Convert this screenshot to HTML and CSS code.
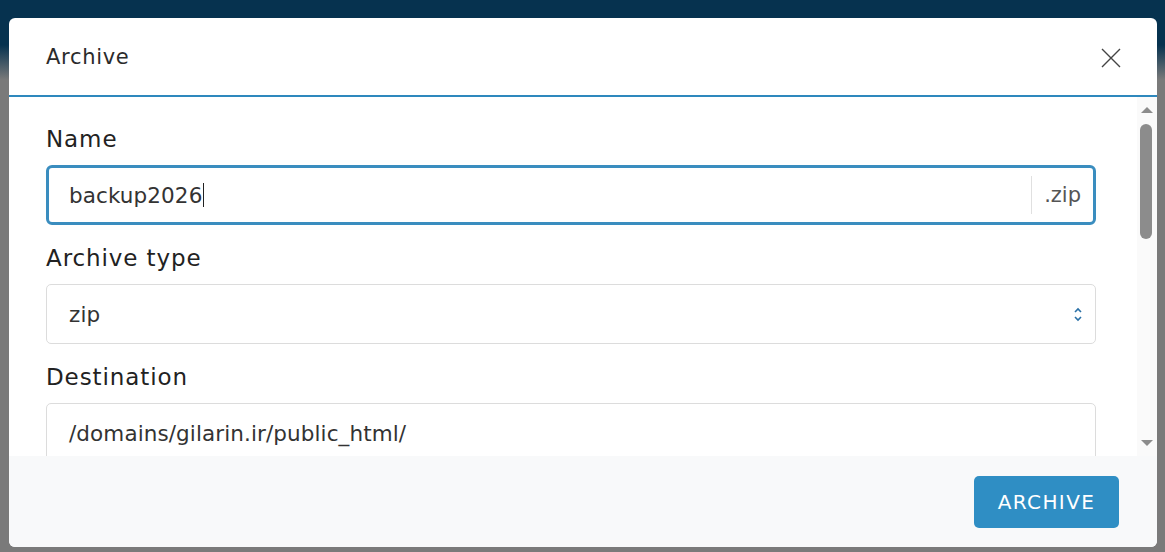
FILE: index.html
```html
<!DOCTYPE html>
<html lang="en">

<head>
    <meta charset="UTF-8">
    <meta name="viewport" content="width=device-width, initial-scale=1.0">
    <title>Archive</title>
    <link rel="stylesheet" href="styles.css">
</head>

<body>

    <div class="modal">
        <div class="modalHeader">
            <h2 class="modalTitle">Archive</h2>
            <button class="closeBtn" aria-label="Close">
                <svg width="20" height="20" viewBox="0 0 20 20">
                    <path d="M1 1L19 19M19 1L1 19" stroke="#444" stroke-width="1.4" fill="none" />
                </svg>
            </button>
        </div>

        <div class="modalBody">
            <div class="bodyContent">
                <label class="fieldLabel">Name</label>
                <div class="inputBox focused">
                    <span class="inputText">backup2026<span class="caret"></span></span>
                    <span class="suffix">.zip</span>
                </div>

                <label class="fieldLabel">Archive type</label>
                <div class="inputBox">
                    <span class="inputText">zip</span>
                    <svg class="chevrons" width="10" height="15" viewBox="0 0 10 15">
                        <path d="M2 5L5 2L8 5M2 10L5 13L8 10" stroke="#2a70a6" stroke-width="1.6" fill="none" />
                    </svg>
                </div>

                <label class="fieldLabel">Destination</label>
                <div class="inputBox">
                    <span class="inputText">/domains/gilarin.ir/public_html/</span>
                </div>
            </div>

            <div class="scrollBar">
                <svg width="20" height="16" viewBox="0 0 20 16">
                    <path d="M4 11L10 5L16 11Z" fill="#8c8c8c" />
                </svg>
                <div class="track">
                    <div class="thumb"></div>
                </div>
                <svg width="20" height="16" viewBox="0 0 20 16">
                    <path d="M4 5L10 11L16 5Z" fill="#8c8c8c" />
                </svg>
            </div>
        </div>

        <div class="modalFooter">
            <button class="archiveBtn">ARCHIVE</button>
        </div>
    </div>

</body>

</html>
```

FILE: styles.css
```css
* {
    margin: 0px;
    box-sizing: border-box;
}

body {
    height: 552px;
    padding: 18px 8px 5px 9px;
    background: linear-gradient(#06324f 0px, #06324f 45px, #7a7a7a 80px);
    font-family: "DejaVu Sans", "Open Sans", sans-serif;
    overflow: hidden;
}

.modal {
    height: 529px;
    background-color: white;
    border-radius: 6px;
    display: flex;
    flex-direction: column;
    overflow: hidden;
}

.modalHeader {
    height: 79px;
    border-bottom: 2px solid #2e88bd;
    display: flex;
    align-items: center;
    justify-content: space-between;
    padding: 0 36px 0 37px;
}

.modalTitle {
    font-size: 21px;
    font-weight: normal;
    color: #2b2b2b;
    letter-spacing: 0.7px;
}

.closeBtn {
    border: 0;
    background: none;
    padding: 0;
    display: flex;
    margin-top: 2px;
}

.modalBody {
    flex: 1;
    display: flex;
    overflow: hidden;
}

.bodyContent {
    flex: 1;
    padding: 27px 41px 0 37px;
    display: flex;
    flex-direction: column;
}

.fieldLabel {
    font-size: 23px;
    color: #222;
    line-height: 30px;
    letter-spacing: 0.9px;
    margin-bottom: 11px;
}

.inputBox {
    height: 60px;
    flex-shrink: 0;
    border: 1px solid #dcdcdc;
    border-radius: 5px;
    display: flex;
    align-items: center;
    padding-left: 22px;
    margin-bottom: 18px;
}

.inputBox.focused {
    border: 3px solid #3a8dbf;
    border-radius: 6px;
    padding-left: 20px;
}

.inputText {
    flex: 1;
    font-size: 21.5px;
    color: #333;
    letter-spacing: 0.1px;
    display: flex;
    align-items: center;
}

.caret {
    width: 1px;
    height: 24px;
    background-color: #222;
    margin-left: 1px;
}

.suffix {
    height: 38px;
    border-left: 1px solid #e0e0e0;
    padding: 0 12px;
    font-size: 21px;
    color: #555;
    display: flex;
    align-items: center;
}

.chevrons {
    margin-right: 12px;
}

.scrollBar {
    width: 20px;
    background-color: #fafafa;
    display: flex;
    flex-direction: column;
    padding: 5px 0 5px 0;
}

.track {
    flex: 1;
    padding: 6px 5px 0 3px;
}

.thumb {
    height: 115px;
    background-color: #8c8c8c;
    border-radius: 6px;
}

.modalFooter {
    height: 91px;
    background-color: #f8f9fa;
    display: flex;
    align-items: center;
    justify-content: flex-end;
    padding-right: 38px;
}

.archiveBtn {
    border: 0;
    width: 145px;
    height: 52px;
    border-radius: 5px;
    background-color: #2f8ec4;
    color: white;
    font-family: "DejaVu Sans", "Open Sans", sans-serif;
    font-size: 20px;
    letter-spacing: 1.4px;
}
```
